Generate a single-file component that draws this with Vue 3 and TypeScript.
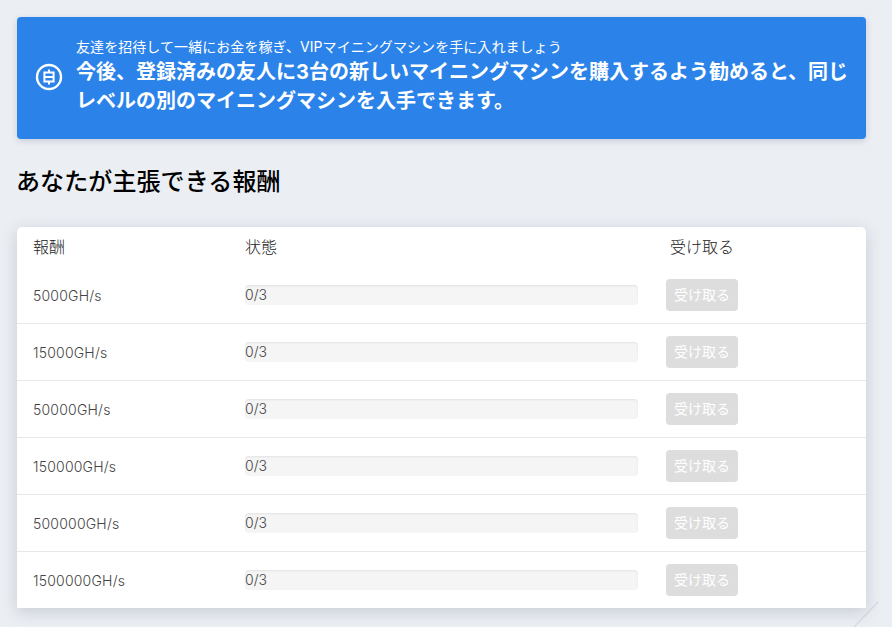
<script setup lang="ts">
const rewards = ['5000GH/s', '15000GH/s', '50000GH/s', '150000GH/s', '500000GH/s', '1500000GH/s']
</script>

<template>
  <div class="page">
    <svg class="deco" width="40" height="40" viewBox="0 0 40 40" aria-hidden="true">
      <path d="M26 15 L2 40" stroke="#d6dae1" stroke-width="1.2" fill="none" />
    </svg>
    <section class="banner">
      <svg class="coin" width="28" height="28" viewBox="0 0 28 28" aria-hidden="true">
        <circle cx="14" cy="14" r="12" fill="none" stroke="#fff" stroke-width="2.4" />
        <path d="M9.4 9.6H18.6V18.4H9.4ZM9.4 14H18.6M14 6.6V9.6M14 18.4V21.4" fill="none" stroke="#fff" stroke-width="2" />
      </svg>
      <div class="banner-text">
        <p class="small">友達を招待して一緒にお金を稼ぎ、VIPマイニングマシンを手に入れましょう</p>
        <p class="big">今後、登録済みの友人に3台の新しいマイニングマシンを購入するよう勧めると、同じレベルの別のマイニングマシンを入手できます。</p>
      </div>
    </section>

    <h2 class="title">あなたが主張できる報酬</h2>

    <section class="card">
      <div class="row head">
        <div>報酬</div>
        <div>状態</div>
        <div class="head-claim">受け取る</div>
      </div>
      <div v-for="r in rewards" :key="r" class="row item">
        <div class="amount">{{ r }}</div>
        <div class="progress">0/3</div>
        <div><button class="claim" disabled>受け取る</button></div>
      </div>
    </section>
  </div>
</template>

<style scoped>
.page {
  position: relative;
  box-sizing: border-box;
  width: 892px;
  height: 627px;
  padding: 17px 26px 0 17px;
  overflow: hidden;
  background: #ebeef3;
  font-family: "Inter", "Noto Sans CJK JP", sans-serif;
  color: #555;
}
.deco {
  position: absolute;
  right: 0;
  bottom: 0;
}
.banner {
  display: flex;
  align-items: center;
  gap: 14px;
  box-sizing: border-box;
  height: 122px;
  padding: 0 16px 2px 18px;
  background: #2b83ea;
  border-radius: 4px;
  box-shadow: 0 2px 6px rgba(60, 80, 110, 0.2);
  color: #fff;
}
.coin {
  flex: none;
}
.banner-text {
  min-width: 0;
  width: 775px;
  margin-left: -1px;
}
.small {
  margin: 0 0 2px;
  font-size: 14px;
  line-height: 18px;
  letter-spacing: 0.07px;
}
.big {
  margin: 0;
  font-size: 20px;
  line-height: 29px;
  font-weight: 700;
}
.title {
  margin: 27px 0 30px -1px;
  height: 31px;
  font-size: 24px;
  line-height: 31px;
  font-weight: 500;
  letter-spacing: 0.1px;
  color: #000;
}
.card {
  position: relative;
  background: #fff;
  border-radius: 5px 5px 0 0;
  box-shadow: 0 4px 16px rgba(60, 70, 90, 0.2);
}
.row {
  display: grid;
  grid-template-columns: 212px 421px 1fr;
  padding-left: 16px;
  align-items: center;
}
.head {
  box-sizing: border-box;
  height: 40px;
  padding-bottom: 3px;
  font-size: 16px;
  font-weight: 300;
  color: #222;
}
.head-claim {
  padding-left: 4px;
}
.item {
  height: 57px;
  box-sizing: border-box;
  border-bottom: 1px solid #e8e8e8;
  font-size: 14px;
  font-weight: 300;
  color: #444;
}
.item:last-child {
  height: 56px;
  border-bottom: 0;
}
.amount {
  letter-spacing: 0.2px;
}
.progress {
  box-sizing: border-box;
  width: 393px;
  height: 20px;
  line-height: 20px;
  background: #f5f5f5;
  border-radius: 4px;
  box-shadow: inset 0 1px 2px rgba(0, 0, 0, 0.08);
  color: #444;
}
.claim {
  display: block;
  width: 72px;
  height: 32px;
  padding: 0 0 2px;
  border: 0;
  border-radius: 4px;
  background: #dddddd;
  color: #fff;
  font: inherit;
  font-size: 14px;
  font-weight: 400;
}
</style>
